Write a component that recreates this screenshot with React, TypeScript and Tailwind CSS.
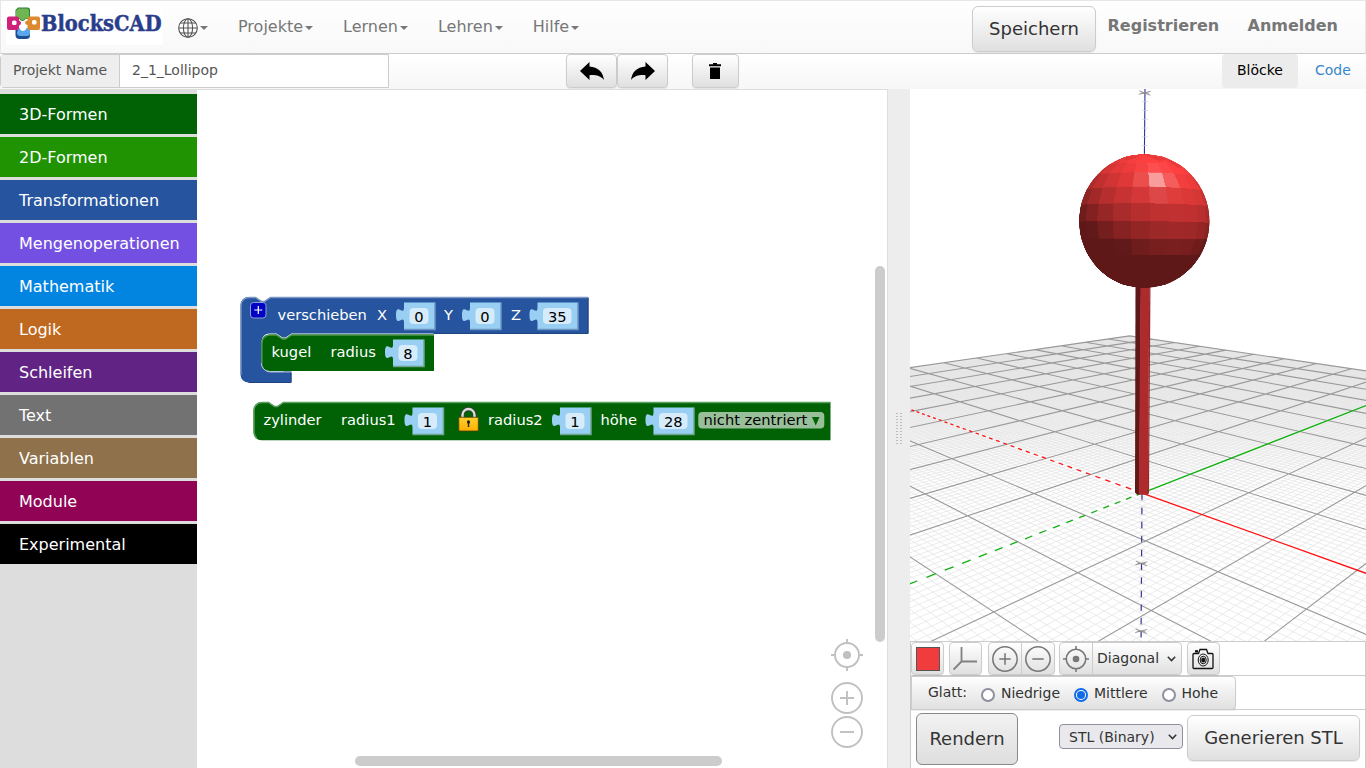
import React from "react";

const font = '"DejaVu Sans", sans-serif';

/* ---------- 3D projection ---------- */
type V3 = [number, number, number];
type V2 = [number, number];

// one unit = 10 mm
const weight = (p: V3) => -0.0758 * p[0] + 0.0807 * p[1] - 0.02068 * p[2] + 1;
const project = (p: V3): V2 => {
  const w = weight(p);
  return [
    (-31.28 * p[0] + 144.27 * p[1] - 23.15 * p[2] + 1142) / w,
    (-17.42 * p[0] + 19.42 * p[1] - 82 * p[2] + 493.1) / w,
  ];
};
const lerp = (a: V3, b: V3, t: number): V3 => [
  a[0] + (b[0] - a[0]) * t,
  a[1] + (b[1] - a[1]) * t,
  a[2] + (b[2] - a[2]) * t,
];
const NEAR = 0.25;
const segment = (a: V3, b: V3): string => {
  const wa = weight(a);
  const wb = weight(b);
  if (wa < NEAR && wb < NEAR) return "";
  let p = a;
  let q = b;
  if (wa < NEAR) p = lerp(a, b, (NEAR - wa) / (wb - wa));
  if (wb < NEAR) q = lerp(a, b, (NEAR - wa) / (wb - wa));
  const [x1, y1] = project(p);
  const [x2, y2] = project(q);
  return `M${x1.toFixed(1)} ${y1.toFixed(1)}L${x2.toFixed(1)} ${y2.toFixed(1)}`;
};
let majorPath = "";
let minorPath = "";
for (let n = -100; n <= 100; n++) {
  if (n === 0) continue;
  const v = n / 10;
  const d = segment([v, -10, 0], [v, 10, 0]) + segment([-10, v, 0], [10, v, 0]);
  if (n % 10 === 0) majorPath += d;
  else minorPath += d;
}

// negative half axes: 1 mm dashes, 1 mm gaps
const dashes = (dir: V3, mm: number) => {
  let d = "";
  for (let n = 0; n < mm; n += 2) {
    const at = (t: number): V3 => [-dir[0] * t, -dir[1] * t, -dir[2] * t];
    d += segment(at(n / 10), at((n + 1) / 10));
  }
  return d;
};
const dashX = dashes([1, 0, 0], 100);
const dashY = dashes([0, 1, 0], 60);
const dashZ = dashes([0, 0, 1], 24);

/* ---------- sphere ---------- */
const CAM_AZ = (-46.8 * Math.PI) / 180;
const norm = (v: V3): V3 => {
  const l = Math.hypot(v[0], v[1], v[2]);
  return [v[0] / l, v[1] / l, v[2] / l];
};
const dot = (a: V3, b: V3) => a[0] * b[0] + a[1] * b[1] + a[2] * b[2];
const LIGHT = norm([0.25, 0.87, 0.45]);
const HALF = norm([0.2, 0.58, 0.8]);
const RAD = Math.PI / 180;
const facets: { d: string; fill: string }[] = [];
const latitudes = [-90, -70, -56, -42, -28, -14, 0, 14, 28, 42.5, 56, 70, 90];
for (let b = 0; b < latitudes.length - 1; b++) {
  const lo = latitudes[b];
  const hi = latitudes[b + 1];
  for (let s = 0; s < 24; s++) {
    const rel = s * 15 - 180 + 5;
    const at = (la: number, az: number): V3 => {
      const r = 0.812 * Math.cos(la * RAD);
      const a = CAM_AZ + az * RAD;
      return [r * Math.cos(a), r * Math.sin(a), 3.5 + 0.8 * Math.sin(la * RAD)];
    };
    const ml = ((lo + hi) / 2) * RAD;
    const ma = (rel + 7.5) * RAD;
    const n: V3 = [Math.cos(ml) * Math.sin(ma), Math.sin(ml), Math.cos(ml) * Math.cos(ma)];
    if (n[2] < -0.12) continue;
    const k = Math.min(1, 0.375 + 0.64 * Math.max(0, dot(n, LIGHT)));
    const sp = 0.5 * Math.pow(Math.max(0, dot(n, HALF)), 60);
    const mix = (c: number) => Math.round(c * k + (255 - c * k) * sp);
    const pts = [at(lo, rel), at(lo, rel + 15), at(hi, rel + 15), at(hi, rel)].map(project);
    facets.push({
      d: "M" + pts.map((p) => `${p[0].toFixed(1)} ${p[1].toFixed(1)}`).join("L") + "Z",
      fill: `rgb(${mix(254)},${mix(64)},${mix(64)})`,
    });
  }
}

const zTicks = (from: number, to: number) => {
  let d = "";
  for (let z = from; z <= to; z++) {
    if (z % 10 === 0) continue;
    const [x, y] = project([0, 0, z / 10]);
    d += `M${x - 2.5} ${y}h6`;
  }
  return d;
};

function Star({ x, y }: { x: number; y: number }) {
  return (
    <path
      d={`M${x - 6} ${y + 1.5}L${x + 6} ${y - 1.5}M${x - 5.5} ${y - 2}L${x + 5.5} ${y + 2.5}M${x - 4} ${y + 0.3}h8`}
      stroke="#8a8a8a"
      strokeWidth="0.9"
      fill="none"
    />
  );
}

function Scene() {
  return (
    <svg className="block h-[552px] w-[456px] bg-white" viewBox="910 89 456 552">
      <defs>
        <linearGradient id="haze" gradientUnits="userSpaceOnUse" x1="0" y1="337" x2="0" y2="480">
          <stop offset="0" stopColor="#dedede" />
          <stop offset="0.3" stopColor="#ebebeb" />
          <stop offset="1" stopColor="#ffffff" />
        </linearGradient>
        <clipPath id="ball">
          <ellipse cx="1144.300" cy="221.200" rx="65" ry="66.900" />
        </clipPath>
      </defs>
      <path d="M910 370L1129.600 337L1366 372V480H910Z" fill="url(#haze)" />
      <path d={minorPath} stroke="#e6e6e6" strokeWidth="0.8" fill="none" />
      <path d={majorPath} stroke="#999" strokeWidth="1.100" fill="none" />
      <path d={dashX} stroke="#ff1010" strokeWidth="1.300" />
      <path d={dashY} stroke="#10b010" strokeWidth="1.300" />
      <path d="M1142 493.100L1366 573.300" stroke="#ff1010" strokeWidth="1.300" />
      <path d="M1142 493.100L1366 405.500" stroke="#10b010" strokeWidth="1.300" />
      <path d={dashZ} stroke="#34348f" strokeWidth="1.200" />
      <path d={zTicks(-19, -1)} stroke="#d4d4d4" strokeWidth="0.6" />
      <Star x={1141.4} y={563.3} />
      <Star x={1141.2} y={631} />
      <path d="M1145 89L1144.4 156" stroke="#32329a" strokeWidth="1.1" />
      <path d={zTicks(44, 49)} stroke="#d0d0dc" strokeWidth="0.7" />
      <Star x={1144.8} y={92.8} />
      <path d="M1135.5 284H1141L1139.4 494.6H1137L1135 492.6Z" fill="#5e1818" />
      <path d="M1140.6 284H1149.3L1148 494.7H1138.8Z" fill="#ad2b2c" />
      <path d="M1149.2 284H1150.5L1149 493L1147.9 494.7Z" fill="#96282a" />
      <g clipPath="url(#ball)">
        <ellipse cx="1144.300" cy="221.200" rx="65" ry="66.900" fill="#5f1818" />
        {facets.map((f, i) => (
          <path key={i} d={f.d} fill={f.fill} stroke={f.fill} strokeWidth="0.8" shapeRendering="crispEdges" />
        ))}
      </g>
    </svg>
  );
}

/* ---------- icons ---------- */
function Target({ className }: { className: string }) {
  return (
    <svg className={className} viewBox="0 0 32 32" fill="none" stroke="currentColor" strokeWidth="1.900">
      <circle cx="16" cy="16" r="12" />
      <circle cx="16" cy="16" r="4.1" fill="currentColor" stroke="none" />
      <path d="M16 0v5M16 27v5M0 16h5M27 16h5" />
    </svg>
  );
}
function Zoom({ plus, className }: { plus?: boolean; className: string }) {
  return (
    <svg className={className} viewBox="0 0 32 32" fill="none" stroke="currentColor" strokeWidth="1.900">
      <circle cx="16" cy="16" r="15" />
      <path d={plus ? "M9 16h14M16 9v14" : "M9 16h14"} />
    </svg>
  );
}
function Caret() {
  return <span className="ml-[2px] mt-px inline-block border-x-4 border-t-4 border-x-transparent border-t-[#777]" />;
}

function Logo() {
  return (
    <svg className="block h-[39px] w-[157px] overflow-visible bg-white" viewBox="6 6 157 39">
      <path d="M17 8.5q0-1 1.5-1h9q2.500 0 2.500 2.500v7q0 2-2 2h-2.500q-1 2-3 2t-3-2h-2q-2 0-2-2v-7z" fill="#2f7d3b" />
      <path d="M18 8.500h8.500q2.500 0 2.500 2.500v5.500q0 2-2 2h-2q-1 1.700-2.500 1.700t-2.500-1.700h-2q-2 0-2-2v-5.500z" fill="#6fb551" />
      <path d="M15.500 30h4q1 2 3.500 2t3.500-2h3.500v5.500q0 3.500-4 3.500h-6.500q-4 0-4-4z" fill="#1d4f91" />
      <path d="M18.500 28h1q1 3 3.500 3t3.500-3h1.500q2 0 2 2v3q0 3-3 3h-6q-4 0-4-3.500z" fill="#5aa7ec" />
      <path d="M9 16.500h8q2 0 2 2v2q2 .5 2 2.500t-2 2.500v2.500q0 2-2 2h-8q-2 0-2-2v-9.500q0-2 2-2z" fill="#cf2179" />
      <path d="M29.500 16.500h8.500q2 0 2 2v9.500q0 2-2 2h-8.500q-2 0-2-2v-3q-2.500-.3-2.500-2.200t2.500-2.300v-2q0-2 2-2z" fill="#dd8a2f" />
      <rect x="12" y="20.500" width="4.500" height="4.500" rx="1.500" fill="#fff" />
      <rect x="32" y="20" width="4.500" height="4.500" rx="1.500" fill="#fff" />
      <text
        x="41"
        y="31"
        fontFamily='"DejaVu Serif", serif'
        fontWeight="700"
        fontSize="23"
        fill="#2a3d8a"
        stroke="#2a3d8a"
        strokeWidth="0.500"
        textLength="120.500"
        lengthAdjust="spacingAndGlyphs"
      >
        BlocksCAD
      </text>
    </svg>
  );
}

function Globe() {
  return (
    <svg className="block h-5 w-5" viewBox="0 0 20 20" fill="none" stroke="#555" strokeWidth="1.1">
      <circle cx="10" cy="10" r="9.300" />
      <ellipse cx="10" cy="10" rx="4.600" ry="9.300" />
      <path d="M10 .7v18.600M.7 10h18.600M2.200 5h15.600M2.200 15h15.600" />
    </svg>
  );
}

const bevel = "bg-gradient-to-b from-white to-[#e0e0e0] border border-[#ccc] shadow-[0_1px_1px_rgba(0,0,0,0.08)]";

function Header() {
  return (
    <header className="flex h-[54px] items-start border border-[#e7e7e7] border-b-[#ccc] bg-gradient-to-b from-white to-[#f8f8f8] text-base leading-5 text-[#777]">
      <div className="ml-[5px] mt-[5px]">
        <Logo />
      </div>
      <div className="ml-[15px] mt-[17px] flex items-center">
        <Globe />
        <span className="flex pb-px">
          <Caret />
        </span>
      </div>
      <nav className="ml-[30px] mt-[16px] flex gap-[30px]">
        {["Projekte", "Lernen", "Lehren", "Hilfe"].map((t) => (
          <span key={t} className="flex items-center">
            {t}
            <Caret />
          </span>
        ))}
      </nav>
      <button className={`ml-auto mt-[5px] h-[46px] w-[124px] rounded-md text-lg text-[#333] ${bevel}`}>Speichern</button>
      <span className="ml-[11.5px] mt-[15px] w-[112px] font-bold">Registrieren</span>
      <span className="ml-[28px] mr-[26.5px] mt-[15px] w-[91px] font-bold">Anmelden</span>
    </header>
  );
}

function Toolbar() {
  return (
    <div className="flex h-[35px] items-start bg-gradient-to-b from-white to-[#f7f7f7] text-sm leading-[31px]">
      <div className="flex h-[34px] w-[389px] rounded-l-[4px] border border-[#ccc] text-[#555]">
        <span className="w-[119px] border-r border-[#ccc] bg-[#eee] pl-3">Projekt Name</span>
        <span className="flex-1 bg-white pl-3">2_1_Lollipop</span>
      </div>
      <div className="ml-[177px] flex">
        <button className={`flex h-[34px] w-[51px] items-center justify-center rounded ${bevel}`}>
          <svg className="h-[18px] w-6" viewBox="0 0 24 18">
            <path d="M0 9L9.500 0v4.500C18 5 23 10 24 18C20 13.500 15.500 12.800 9.500 13.200V18Z" />
          </svg>
        </button>
        <button className={`flex h-[34px] w-[51px] items-center justify-center rounded ${bevel}`}>
          <svg className="h-[18px] w-6" viewBox="0 0 24 18">
            <path d="M24 9L14.500 0v4.500C6 5 1 10 0 18C4 13.500 8.500 12.800 14.500 13.200V18Z" />
          </svg>
        </button>
        <button className={`ml-6 flex h-[34px] w-[47px] items-center justify-center rounded pr-[2px] ${bevel}`}>
          <svg className="h-4 w-3" viewBox="0 0 12 16">
            <path d="M0 1.200h4V0h4v1.200h4v2H0zM1 4.500h10V16H1z" />
          </svg>
        </button>
      </div>
      <div className="ml-auto flex leading-[33px]">
        <span className="h-[34px] w-[76px] rounded bg-[#ececec] text-center text-black">Blöcke</span>
        <span className="h-[34px] w-[68px] pl-[17px] text-[#3787c8]">Code</span>
      </div>
    </div>
  );
}

const categories = [
  ["3D-Formen", "bg-[#006205]"],
  ["2D-Formen", "bg-[#209303]"],
  ["Transformationen", "bg-[#26549e]"],
  ["Mengenoperationen", "bg-[#7450e2]"],
  ["Mathematik", "bg-[#0185e1]"],
  ["Logik", "bg-[#bf6920]"],
  ["Schleifen", "bg-[#612485]"],
  ["Text", "bg-[#727272]"],
  ["Variablen", "bg-[#8f724b]"],
  ["Module", "bg-[#900355]"],
  ["Experimental", "bg-black"],
];

function Toolbox() {
  return (
    <aside className="flex w-[197px] flex-col gap-[3px] bg-[#ddd] pt-[5px]">
      {categories.map(([name, bg]) => (
        <div key={name} className={`h-10 pl-[19px] text-base leading-[42px] text-white ${bg}`}>
          {name}
        </div>
      ))}
    </aside>
  );
}

function NumberBlock({ x, y, w, value, edge }: { x: number; y: number; w: number; value: string; edge: string }) {
  return (
    <g>
      <path d={`M${x} ${y}h${w}v27h${-w}v-7c0-9-8 6-8-7.500s8 2 8-7.500z`} fill="#99cff3" />
      <path d={`M${x} ${y + 27}h${w}v-27`} fill="none" stroke={edge} strokeWidth="1.500" />
      <rect x={x + 5.5} y={y + 5.5} width={w - 12} height="16" rx="4" fill="#d6ecfa" />
      <text x={x + 5.5 + (w - 12) / 2} y={y + 19} textAnchor="middle" fill="#000">
        {value}
      </text>
    </g>
  );
}

function Blocks() {
  return (
    <svg className="block h-[678px] w-[690px]" viewBox="197.500 90 690 678" fontFamily={font} fontSize="14.67">
      <path
        d="M241 305a8 8 0 0 1 8-8h7l6 4h3l6-4H589V333.500H292l-6 4h-3l-6-4h-7a8 8 0 0 0-8 8V363a8 8 0 0 0 8 8.500H292V382.500H249a8 8 0 0 1-8-8z"
        fill="#26549e"
      />
      <path d="M588.500 298V333.500H434M291.500 373V382.500H249" fill="none" stroke="#1e437e" strokeWidth="1" />
      <path d="M241.500 375V305.500a8 8 0 0 1 8-8h6.500l6 4h3l6-4H588.500M265 369a8 8 0 0 0 6 3H291" fill="none" stroke="#7d98c5" strokeWidth="1.300" />
      <rect x="251" y="302.500" width="15.500" height="15.500" rx="3" fill="#0202c4" stroke="#8c9fd6" strokeWidth="1" />
      <path d="M254.800 310h8M258.800 306v8" stroke="#fff" strokeWidth="1.200" />
      <g fill="#fff">
        <text x="278" y="320">verschieben</text>
        <text x="377.500" y="320">X</text>
        <text x="444.500" y="320">Y</text>
        <text x="511.500" y="320">Z</text>
      </g>
      <NumberBlock x={404.5} y={302.5} w={31} value="0" edge="#6d94c4" />
      <NumberBlock x={470.5} y={302.5} w={31} value="0" edge="#6d94c4" />
      <NumberBlock x={538} y={302.5} w={40.5} value="35" edge="#6d94c4" />

      <path d="M262 342.500a8 8 0 0 1 8-8h7l6 4h3l6-4H434.500V371H270a8 8 0 0 1-8-8z" fill="#006205" />
      <path d="M262.500 363V343a8 8 0 0 1 8-8h6.500l6 4h3l6-4H434.500" fill="none" stroke="#4f944f" strokeWidth="1.300" />
      <path d="M262 363a8 8 0 0 0 8 8.500h14" fill="none" stroke="#b9c9e2" strokeWidth="1" />
      <g fill="#fff">
        <text x="272" y="357">kugel</text>
        <text x="331" y="357">radius</text>
      </g>
      <NumberBlock x={393.5} y={339.5} w={31} value="8" edge="#6fa58c" />

      <path d="M254 410a8 8 0 0 1 8-8h7l6 4h3l6-4H831V440.300H262a8 8 0 0 1-8-8z" fill="#006205" />
      <path d="M257 438a8 8 0 0 1-2.500-6V410.500a8 8 0 0 1 8-8h6.500l6 4h3l6-4H830.500" fill="none" stroke="#5d9f60" strokeWidth="1.500" />
      <g fill="#fff">
        <text x="264" y="425">zylinder</text>
        <text x="341.500" y="425">radius1</text>
        <text x="488.500" y="425">radius2</text>
        <text x="601" y="425">höhe</text>
      </g>
      <NumberBlock x={413} y={407.5} w={31} value="1" edge="#6fa58c" />
      <NumberBlock x={560.5} y={407.5} w={31} value="1" edge="#6fa58c" />
      <NumberBlock x={654} y={407.5} w={40.5} value="28" edge="#6fa58c" />
      <defs>
        <linearGradient id="lock" x1="0" y1="0" x2="0" y2="1">
          <stop offset="0" stopColor="#ffcf2e" />
          <stop offset="1" stopColor="#ffb000" />
        </linearGradient>
      </defs>
      <path d="M463 418v-3a6 6 0 0 1 12 0v3" fill="none" stroke="#3c3c3c" strokeWidth="4" />
      <path d="M463 418v-3a6 6 0 0 1 12 0v3" fill="none" stroke="#dcdcdc" strokeWidth="2.400" />
      <rect x="459.300" y="417.300" width="19.500" height="13.700" rx="1" fill="url(#lock)" stroke="#5a3c00" strokeWidth="0.800" />
      <path d="M467.500 422.500a1.600 1.600 0 1 1 3 0l-.8 1.500v3h-1.400v-3z" fill="#222" />
      <rect x="698.800" y="412" width="126" height="16.500" rx="4" fill="#98bf99" />
      <text x="704" y="425" fill="#000">
        nicht zentriert
      </text>
      <path d="M812.500 417h7.500l-3.750 8.500z" fill="#006205" />
    </svg>
  );
}

function Workspace() {
  return (
    <main className="relative w-[690px] border-t border-[#ddd] bg-white">
      <Blocks />
      <div className="absolute left-[634px] top-[549px] flex flex-col text-[#c0c0c0]">
        <Target className="h-8 w-8" />
        <Zoom plus className="mt-[11px] h-8 w-8" />
        <Zoom className="mt-[2px] h-8 w-8" />
      </div>
      <div className="absolute left-[678px] top-[176px] h-[376px] w-[10px] rounded-full bg-[#ccc]" />
      <div className="absolute left-[157.5px] top-[666px] h-[10px] w-[367px] rounded-full bg-[#ccc]" />
    </main>
  );
}

function Divider() {
  return (
    <div className="flex w-[23px] items-center justify-center border-l border-[#ddd] bg-[#ededed]">
      <div className="grid grid-cols-2 gap-[2px]">
        {Array.from({ length: 22 }, (_, i) => (
          <span key={i} className="h-px w-[2px] bg-[#bdbdbd]" />
        ))}
      </div>
    </div>
  );
}

function Radio({ label, on }: { label: string; on?: boolean }) {
  return (
    <span className="flex items-center gap-[6px]">
      <span
        className={`mt-[3px] flex h-[14px] w-[14px] items-center justify-center rounded-full border-2 bg-white ${
          on ? "border-[#0f6be8]" : "border-[#8f8f9d]"
        }`}
      >
        {on && <span className="h-2 w-2 rounded-full bg-[#0f6be8]" />}
      </span>
      {label}
    </span>
  );
}

function Chevron() {
  return (
    <svg className="h-[6px] w-[9px]" viewBox="0 0 9 6" fill="none" stroke="#333" strokeWidth="1.500">
      <path d="M.8.800L4.500 4.600L8.200.800" />
    </svg>
  );
}

function Controls() {
  const cell = "flex h-[33px] w-[33px] items-center justify-center";
  return (
    <div className="flex h-[127px] flex-col border-l border-r border-t border-[#ccc] bg-white text-sm text-[#333]">
      <div className="flex h-[34px] border-b border-[#ccc]">
        <span className={`${cell} rounded ${bevel}`}>
          <span className="h-6 w-6 border border-[#555] bg-[#f03c3c]" />
        </span>
        <span className={`${cell} ml-[5px] rounded pr-[2px] ${bevel}`}>
          <svg className="h-6 w-6" viewBox="0 0 24 24" fill="none" stroke="#808080" strokeWidth="1.800">
            <path d="M8.500 0v14.500H24M8.500 14.500L.6 22.500" />
          </svg>
        </span>
        <span className={`ml-[6px] flex h-[33px] w-[67px] rounded text-[#777] ${bevel}`}>
          <span className="flex w-[33px] items-center justify-center border-r border-[#ccc]">
            <Zoom plus className="h-[26px] w-[26px]" />
          </span>
          <span className="flex flex-1 items-center justify-center">
            <Zoom className="h-[26px] w-[26px]" />
          </span>
        </span>
        <span className={`ml-[4px] flex h-[33px] w-[123px] rounded ${bevel}`}>
          <span className="flex w-[33px] items-center justify-center border-r border-[#ccc] text-[#777]">
            <Target className="h-[26px] w-[26px]" />
          </span>
          <span className="flex flex-1 items-center pl-1">
            <span className="w-[70px] leading-[31px]">Diagonal</span>
            <Chevron />
          </span>
        </span>
        <span className={`${cell} ml-[5px] rounded pr-[2px] ${bevel}`}>
          <svg className="h-[22px] w-[22px]" viewBox="0 0 22 22" fill="none" stroke="#111" strokeWidth="1.300">
            <path d="M2 5.500h4.500l1.500-4h6.500l1.500 4h4q1 0 1 1v13q0 1-1 1H2q-1 0-1-1v-13q0-1 1-1z" />
            <ellipse cx="11.200" cy="12" rx="5" ry="6" strokeWidth="1" />
            <ellipse cx="11.200" cy="12" rx="3" ry="3.800" strokeWidth="1" />
            <ellipse cx="11.200" cy="12" rx="2" ry="2.600" fill="#111" stroke="none" />
            <path d="M3 3.300h3" strokeWidth="2.300" />
          </svg>
        </span>
      </div>
      <div className="flex h-[34px] border-b border-[#ccc]">
        <div className={`flex h-[34px] w-[325px] items-center rounded-r pl-4 ${bevel}`}>
          <span className="w-[53px] pb-[3px]">Glatt:</span>
          <Radio label="Niedrige" />
          <span className="w-[14px]" />
          <Radio label="Mittlere" on />
          <span className="w-[14px]" />
          <Radio label="Hohe" />
        </div>
      </div>
      <div className="flex items-start">
        <button className="ml-[5px] mt-[3px] h-[52px] w-[102px] rounded-md border border-[#888] bg-gradient-to-b from-[#f2f2f2] to-[#dedede] text-lg">
          Rendern
        </button>
        <span className="ml-[41px] mt-[14px] flex h-[25px] w-[124px] items-center rounded-[4px] border border-[#8f8f9d] bg-[#e9e9ed] pl-[9px]">
          <span className="w-[99px]">STL (Binary)</span>
          <Chevron />
        </span>
        <button className={`ml-1 mt-[5px] h-[46px] w-[173px] rounded-md text-lg ${bevel}`}>Generieren STL</button>
      </div>
    </div>
  );
}

export default function App() {
  return (
    <div className="flex h-[768px] w-[1366px] flex-col overflow-hidden bg-white font-['DejaVu_Sans',sans-serif]">
      <Header />
      <Toolbar />
      <div className="flex h-[679px]">
        <Toolbox />
        <Workspace />
        <Divider />
        <section className="flex w-[456px] flex-col">
          <Scene />
          <Controls />
        </section>
      </div>
    </div>
  );
}
